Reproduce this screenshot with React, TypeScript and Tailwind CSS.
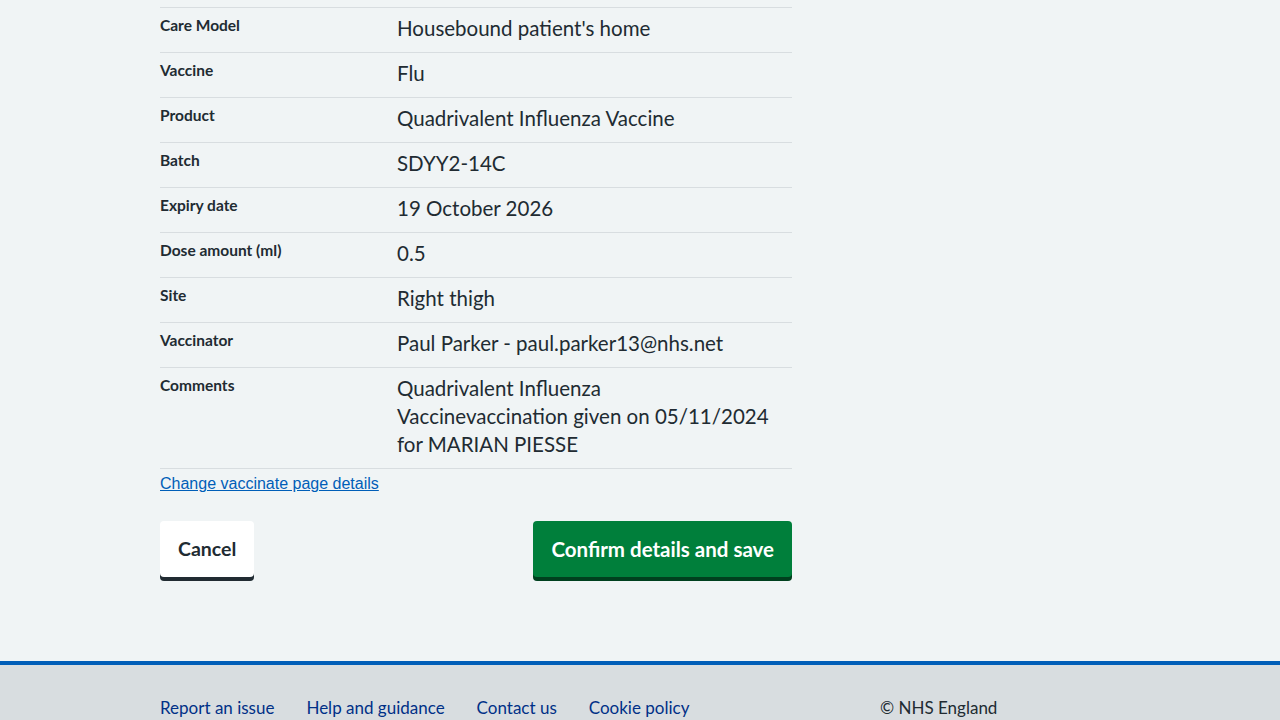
import React from 'react'

const rows: { label: string; value: string }[] = [
	{ label: 'Care Model', value: "Housebound patient's home" },
	{ label: 'Vaccine', value: 'Flu' },
	{ label: 'Product', value: 'Quadrivalent Influenza Vaccine' },
	{ label: 'Batch', value: 'SDYY2-14C' },
	{ label: 'Expiry date', value: '19 October 2026' },
	{ label: 'Dose amount (ml)', value: '0.5' },
	{ label: 'Site', value: 'Right thigh' },
	{ label: 'Vaccinator', value: 'Paul Parker - paul.parker13@nhs.net' },
	{ label: 'Comments', value: 'Quadrivalent Influenza Vaccinevaccination given on 05/11/2024 for MARIAN PIESSE' },
]

const footerLinks = ['Report an issue', 'Help and guidance', 'Contact us', 'Cookie policy']

export default function App() {
	return (
		<div className="min-h-screen bg-[#f0f4f5] text-[#212b32] font-['Lato','Liberation_Sans',sans-serif]">
			<main className="pt-[7px] pb-[84px]">
				<div className="ml-[160px] w-[632px]">
					{/* Summary list */}
					<dl className="border-t border-[#d8dde0]">
						{rows.map((row) => (
							<div key={row.label} className="flex border-b border-[#d8dde0]">
								<dt className="w-[237px] shrink-0 pt-[7px] text-[15.5px] leading-[20px] font-bold">
									{row.label}
								</dt>
								<dd className="flex-1 pr-[22px] pt-[6px] pb-[10px] text-[20.5px] leading-[28px]">
									{row.value}
								</dd>
							</div>
						))}
					</dl>

					<a
						href="#"
						className="block mt-[5px] text-[16px] leading-[20px] text-[#005eb8] underline font-['Liberation_Sans',Arial,sans-serif]"
					>
						Change vaccinate page details
					</a>

					{/* Actions */}
					<div className="mt-[27px] flex justify-between">
						<button className="h-[56px] px-[18px] rounded-[4px] bg-white text-[19.5px] font-bold text-[#212b32] shadow-[0_4px_0_#212b32]">
							Cancel
						</button>
						<button className="h-[56px] px-[18px] rounded-[4px] bg-[#007f3b] text-[20.5px] font-bold text-white shadow-[0_4px_0_#00401e]">
							Confirm details and save
						</button>
					</div>
				</div>
			</main>

			<footer className="border-t-4 border-[#005eb8] bg-[#d8dde0] pt-[31px] pb-[24px]">
				<div className="ml-[160px] w-[960px] flex items-center">
					<ul className="flex gap-[32px] w-[720px]">
						{footerLinks.map((l) => (
							<li key={l}>
								<a href="#" className="text-[17px] leading-[24px] text-[#003087]">
									{l}
								</a>
							</li>
						))}
					</ul>
					<p className="text-[17px] leading-[24px]">© NHS England</p>
				</div>
			</footer>
		</div>
	)
}
